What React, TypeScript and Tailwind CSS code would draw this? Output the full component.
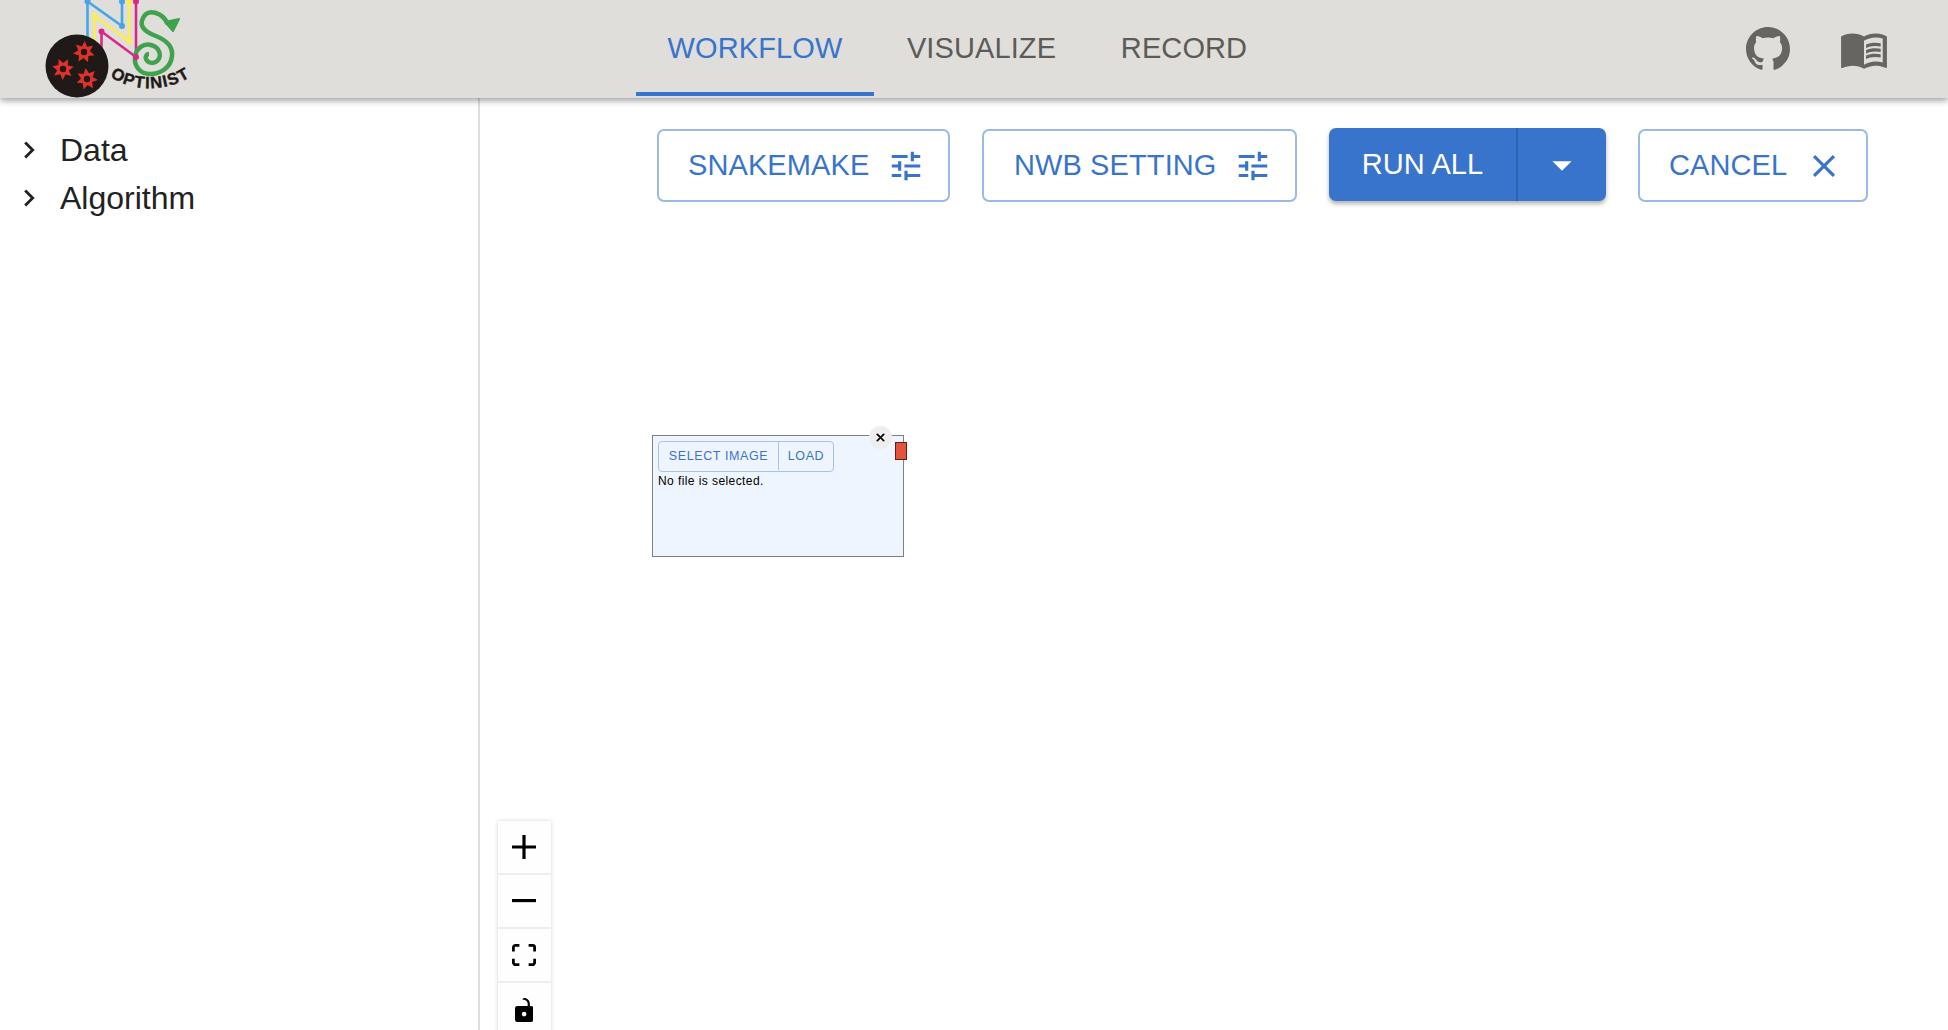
import { MdChevronRight, MdClose, MdArrowDropDown, MdMenuBook, MdTune } from 'react-icons/md';
import { BsGithub } from 'react-icons/bs';

// seven pointed burst used for the red marks on the logo
function burst(cx: number, cy: number, rot: number) {
  const pts: string[] = [];
  for (let i = 0; i < 14; i++) {
    const r = i % 2 === 0 ? 11 : 6;
    const a = rot + (i * Math.PI) / 7;
    pts.push(`${(cx + r * Math.cos(a)).toFixed(1)},${(cy + r * Math.sin(a)).toFixed(1)}`);
  }
  return pts.join(' ');
}

function Logo() {
  return (
    <svg width="240" height="98" viewBox="0 0 240 98" className="block">
      <g fill="none" strokeWidth="2.6">
        <path d="M87.5 45V1.5L122 26V0" stroke="#46a5e5" />
        <path d="M94.5 60V16L129 41V0" stroke="#fcee4f" />
        <path d="M101.5 60V31.5L136 57V0" stroke="#d9278a" />
      </g>
      <circle cx="87.5" cy="1.5" r="3" fill="#46a5e5" />
      <circle cx="122" cy="26" r="3" fill="#46a5e5" />
      <circle cx="122" cy="1.5" r="3" fill="#46a5e5" />
      <circle cx="94.5" cy="16" r="3" fill="#fcee4f" />
      <circle cx="129" cy="41" r="3" fill="#fcee4f" />
      <circle cx="129" cy="1.5" r="3" fill="#fcee4f" />
      <circle cx="101.5" cy="31.5" r="3" fill="#d9278a" />
      <circle cx="136" cy="1.5" r="3" fill="#d9278a" />
      <path
        d="M168 24C162 12 148 8 143 18C138 28 148 33 156 36C168 41 173 48 172 56C171 68 160 74 150 74C140 74 134 66 135 57C136 48 144 43 151 45C159 47 162 55 158 60C155 64 148 64 146 59C145 56 147 54 149 54"
        fill="none"
        stroke="#3fa34d"
        strokeWidth="4.5"
      />
      <path d="M165 22L179 19L173 31Z" fill="#3fa34d" stroke="#3fa34d" strokeWidth="2" strokeLinejoin="round" />
      <circle cx="136" cy="57" r="3" fill="#d9278a" />
      <circle cx="77" cy="66" r="31.5" fill="#1f1a17" />
      <polygon points={burst(84, 52, 0.3)} fill="#e0322a" />
      <polygon points={burst(63, 69, 0.7)} fill="#e0322a" />
      <polygon points={burst(87, 79, 0.1)} fill="#e0322a" />
      <circle cx="84" cy="52" r="3.2" fill="#1f1a17" />
      <circle cx="63" cy="69" r="3.2" fill="#1f1a17" />
      <circle cx="87" cy="79" r="3.2" fill="#1f1a17" />
      <path id="optinist-arc" d="M110 76C130 92 165 92 188 78" fill="none" />
      <text fontFamily="'Liberation Sans', sans-serif" fontWeight="700" fontSize="16.5" fill="#1f1a17" stroke="#1f1a17" strokeWidth="0.4" letterSpacing="1.2">
        <textPath href="#optinist-arc">OPTINIST</textPath>
      </text>
    </svg>
  );
}

function OutlineButton({ label, icon, className }: { label: string; icon: React.ReactNode; className: string }) {
  return (
    <button className={`flex h-[73px] items-center justify-between rounded-[7px] border-2 border-[#9cb9e6] text-[#3874cb] text-[29px] tracking-[0.1px] ${className}`}>
      <span>{label}</span>
      {icon}
    </button>
  );
}

function FlowControls() {
  return (
    <div className="absolute left-[18px] top-[723px] w-[53px] shadow-[0_0_4px_rgba(0,0,0,0.18)]">
      <div className="flex h-[54px] items-center justify-center border-b-2 border-[#eeeeee] bg-[#fefefe] pr-px">
        <svg viewBox="0 0 32 32" className="h-[24px] w-[24px]">
          <path d="M32 18.133H18.133V32h-4.266V18.133H0v-4.266h13.867V0h4.266v13.867H32z" />
        </svg>
      </div>
      <div className="flex h-[54px] items-center justify-center border-b-2 border-[#eeeeee] bg-[#fefefe] pr-px">
        <svg viewBox="0 0 32 5" className="w-[24px]">
          <path d="M0 0h32v4.2H0z" />
        </svg>
      </div>
      <div className="flex h-[54px] items-center justify-center border-b-2 border-[#eeeeee] bg-[#fefefe] pr-px">
        <svg viewBox="0 0 32 30" className="w-[24px]">
          <path d="M3.692 4.63c0-.53.4-.938.939-.938h5.215V0H4.708C2.13 0 0 2.054 0 4.63v5.216h3.692V4.631zM27.354 0h-5.2v3.692h5.17c.53 0 .984.4.984.939v5.215H32V4.631A4.624 4.624 0 0027.354 0zm.954 24.83c0 .532-.4.94-.939.94h-5.215v3.768h5.215c2.577 0 4.631-2.13 4.631-4.707v-5.139h-3.692v5.139zm-23.677.94c-.531 0-.939-.4-.939-.94v-5.138H0v5.139c0 2.577 2.13 4.707 4.708 4.707h5.138V25.77H4.631z" />
        </svg>
      </div>
      <div className="flex h-[54px] items-center justify-center bg-[#fefefe] pr-px">
        <svg viewBox="0 0 25 32" className="h-[24px]">
          <path d="M21.333 10.667H19.81V7.619C19.81 3.429 16.38 0 12.19 0c-4.114 1.828-1.37 2.133.305 2.438 1.676.305 4.42 2.59 4.42 5.181v3.048H3.047A3.056 3.056 0 000 13.714v15.238A3.056 3.056 0 003.048 32h18.285a3.056 3.056 0 003.048-3.048V13.714a3.056 3.056 0 00-3.048-3.047zM12.19 24.533a3.056 3.056 0 01-3.047-3.047 3.056 3.056 0 013.047-3.048 3.056 3.056 0 013.048 3.048 3.056 3.056 0 01-3.048 3.047z" />
        </svg>
      </div>
    </div>
  );
}

function ImageNode() {
  return (
    <div className="absolute left-[172px] top-[337px] h-[122px] w-[252px] border border-[#808080] bg-[#eef5fe] pl-[5px] pt-[5px]">
      <div className="flex h-[31px] w-[176px] rounded-[4px] border border-[#a6c2ea] pb-[1px] text-[12.5px] tracking-[0.6px] text-[#3874cb]">
        <div className="flex w-[120px] items-center justify-center border-r border-[#a6c2ea]">SELECT IMAGE</div>
        <div className="flex flex-1 items-center justify-center">LOAD</div>
      </div>
      <p className="mt-px text-[12px] leading-[16px] tracking-[0.42px] text-black">No file is selected.</p>
      <div className="absolute left-[216px] top-[-10px] flex h-[23px] w-[23px] items-center justify-center rounded-full bg-[#eeeeee]">
        <svg viewBox="0 0 24 24" className="h-[13px] w-[13px]" stroke="black" strokeWidth="1.5">
          <path d="M19 6.41 17.59 5 12 10.59 6.41 5 5 6.41 10.59 12 5 17.59 6.41 19 12 13.41 17.59 19 19 17.59 13.41 12z" />
        </svg>
      </div>
      <div className="absolute left-[242px] top-[6px] h-[18px] w-[12px] border border-[#57231d] bg-[#e5533d]" />
    </div>
  );
}

export default function App() {
  return (
    <div className="flex h-[1030px] w-[1948px] flex-col overflow-hidden bg-white font-['Liberation_Sans',sans-serif]">
      <header className="relative z-10 flex h-[98px] shrink-0 bg-[#dfdeda] shadow-[0_3px_6px_rgba(0,0,0,0.35)]">
        <div className="w-[636px] shrink-0">
          <Logo />
        </div>
        <nav className="flex h-[96px] text-[29px] tracking-[0.1px] text-[#5c5b58]">
          <div className="flex w-[238px] items-center justify-center border-b-4 border-[#3874cb] pt-[5px] text-[#3874cb]">WORKFLOW</div>
          <div className="flex w-[215px] items-center justify-center border-b-4 border-transparent pt-[5px]">VISUALIZE</div>
          <div className="flex w-[190px] items-center justify-center border-b-4 border-transparent pt-[5px]">RECORD</div>
        </nav>
        <div className="ml-auto flex items-center pr-[59px] text-[#666562]">
          <BsGithub className="h-[44px] w-[44px]" />
          <MdMenuBook className="ml-[49px] h-[50px] w-[50px]" />
        </div>
      </header>
      <div className="flex min-h-0 flex-1">
        <aside className="w-[480px] shrink-0 border-r-2 border-[#dfdfdf] pl-[12px] pt-[28px] text-[32px] leading-[48px] text-[#222222]">
          <div className="flex items-center">
            <MdChevronRight className="h-[34px] w-[34px]" />
            <span className="ml-[14px]">Data</span>
          </div>
          <div className="flex items-center">
            <MdChevronRight className="h-[34px] w-[34px]" />
            <span className="ml-[14px]">Algorithm</span>
          </div>
        </aside>
        <main className="relative flex-1">
          <div className="flex justify-end gap-[32px] pr-[80px] pt-[31px]">
            <OutlineButton label="SNAKEMAKE" icon={<MdTune className="h-[38px] w-[38px]" />} className="w-[293px] pl-[29px] pr-[23px]" />
            <OutlineButton label="NWB SETTING" icon={<MdTune className="h-[38px] w-[38px]" />} className="w-[315px] pl-[30px] pr-[23px]" />
            <div className="-mt-px flex h-[73px] w-[277px] rounded-[7px] bg-[#3874cb] text-[29px] tracking-[0.1px] text-white shadow-[0_3px_4px_rgba(0,0,0,0.3)]">
              <div className="flex w-[189px] items-center justify-center border-r-2 border-[#2b62b4]">RUN ALL</div>
              <div className="flex flex-1 items-center justify-center">
                <MdArrowDropDown className="h-[46px] w-[46px]" />
              </div>
            </div>
            <OutlineButton label="CANCEL" icon={<MdClose className="h-[38px] w-[38px]" />} className="w-[230px] pl-[29px] pr-[23px]" />
          </div>
          <ImageNode />
          <FlowControls />
        </main>
      </div>
    </div>
  );
}
